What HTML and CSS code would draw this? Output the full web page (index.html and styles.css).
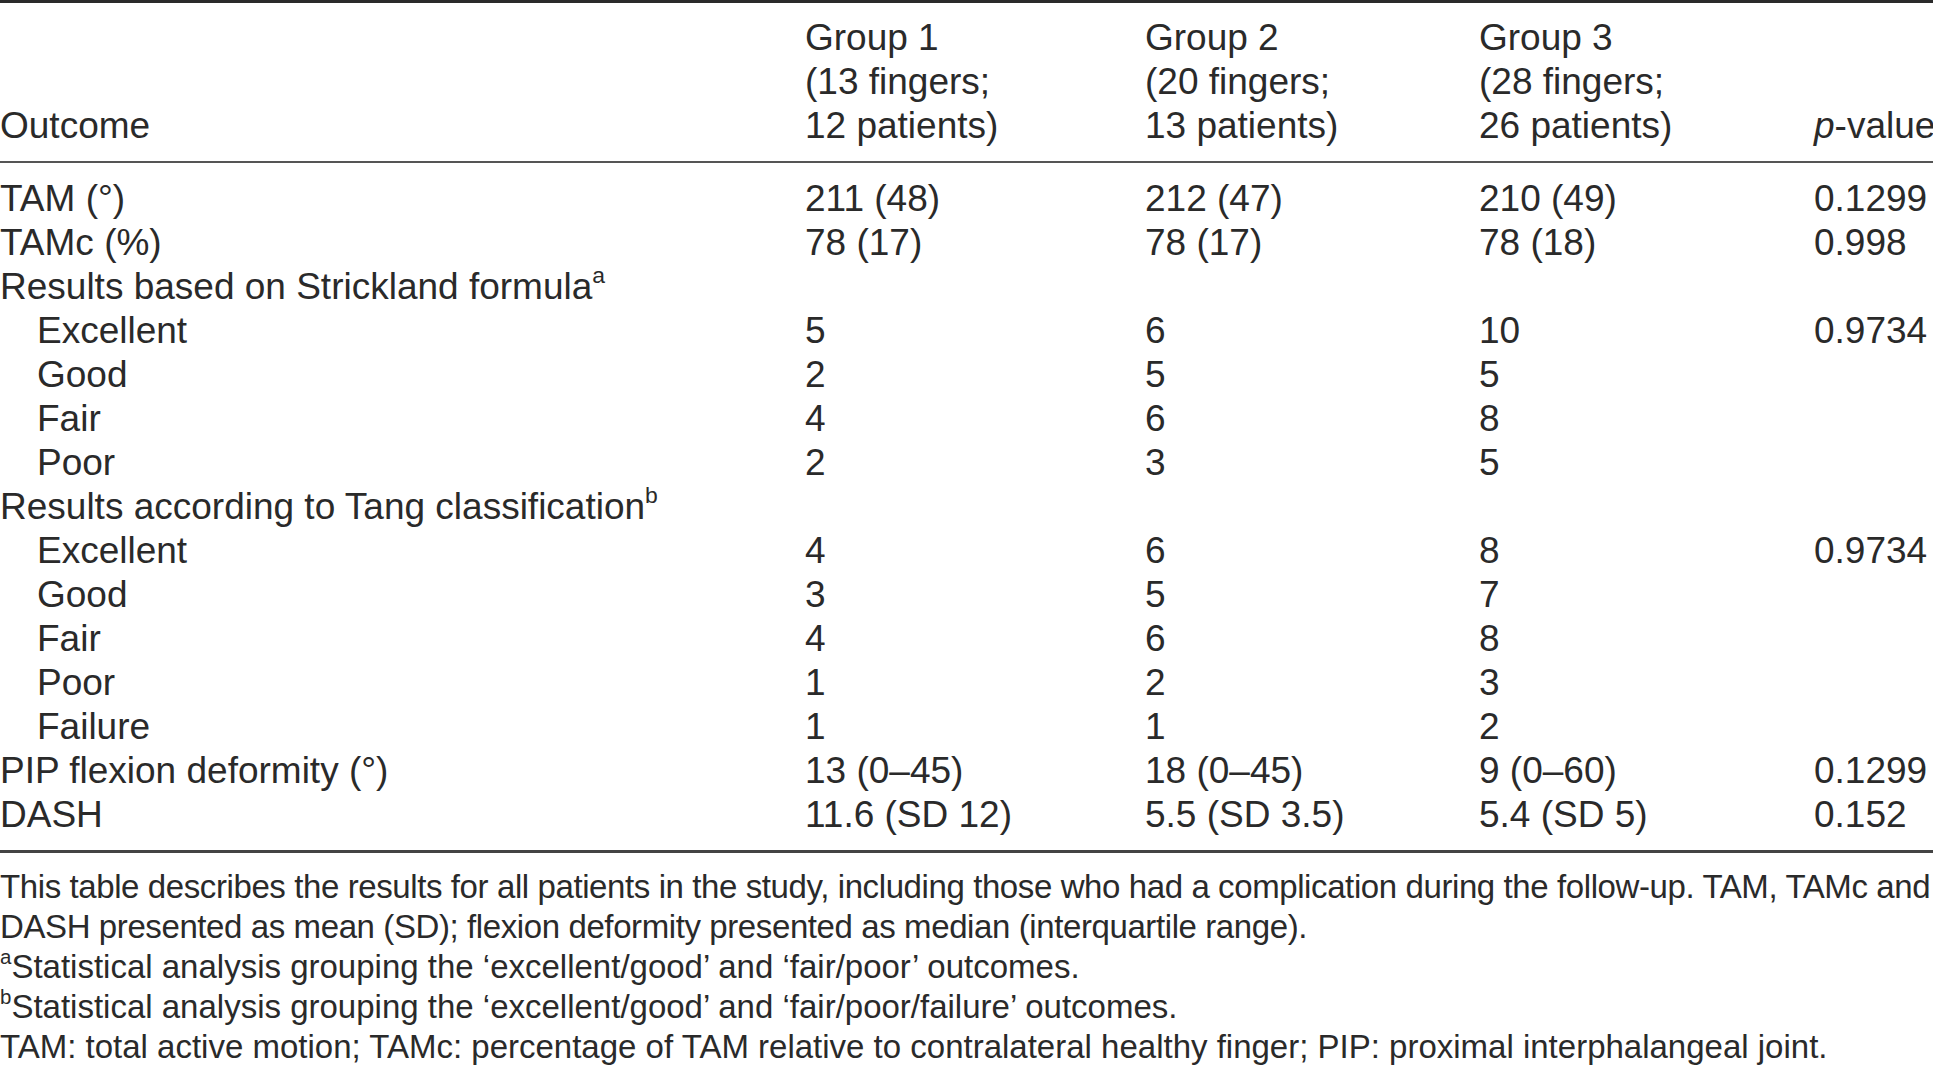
FILE: index.html
```html
<!DOCTYPE html>
<html lang="en">
<head>
<meta charset="utf-8">
<title>Outcomes table</title>
<link rel="stylesheet" href="styles.css">
</head>
<body>
<div class="page">
  <table class="results">
    <colgroup>
      <col class="c-outcome">
      <col class="c-g1">
      <col class="c-g2">
      <col class="c-g3">
      <col class="c-p">
    </colgroup>
    <thead>
      <tr>
        <th>Outcome</th>
        <th>Group 1<br>(13 fingers;<br>12 patients)</th>
        <th>Group 2<br>(20 fingers;<br>13 patients)</th>
        <th>Group 3<br>(28 fingers;<br>26 patients)</th>
        <th><i>p</i>-value</th>
      </tr>
    </thead>
    <tbody>
      <tr class="first"><td>TAM (°)</td><td>211 (48)</td><td>212 (47)</td><td>210 (49)</td><td>0.1299</td></tr>
      <tr><td>TAMc (%)</td><td>78 (17)</td><td>78 (17)</td><td>78 (18)</td><td>0.998</td></tr>
      <tr><td>Results based on Strickland formula<sup>a</sup></td><td></td><td></td><td></td><td></td></tr>
      <tr><td class="sub">Excellent</td><td>5</td><td>6</td><td>10</td><td>0.9734</td></tr>
      <tr><td class="sub">Good</td><td>2</td><td>5</td><td>5</td><td></td></tr>
      <tr><td class="sub">Fair</td><td>4</td><td>6</td><td>8</td><td></td></tr>
      <tr><td class="sub">Poor</td><td>2</td><td>3</td><td>5</td><td></td></tr>
      <tr><td>Results according to Tang classification<sup>b</sup></td><td></td><td></td><td></td><td></td></tr>
      <tr><td class="sub">Excellent</td><td>4</td><td>6</td><td>8</td><td>0.9734</td></tr>
      <tr><td class="sub">Good</td><td>3</td><td>5</td><td>7</td><td></td></tr>
      <tr><td class="sub">Fair</td><td>4</td><td>6</td><td>8</td><td></td></tr>
      <tr><td class="sub">Poor</td><td>1</td><td>2</td><td>3</td><td></td></tr>
      <tr><td class="sub">Failure</td><td>1</td><td>1</td><td>2</td><td></td></tr>
      <tr><td>PIP flexion deformity (°)</td><td>13 (0–45)</td><td>18 (0–45)</td><td>9 (0–60)</td><td>0.1299</td></tr>
      <tr class="last"><td>DASH</td><td>11.6 (SD 12)</td><td>5.5 (SD 3.5)</td><td>5.4 (SD 5)</td><td>0.152</td></tr>
    </tbody>
  </table>
  <div class="notes">
    <p class="tight">This table describes the results for all patients in the study, including those who had a complication during the follow-up. TAM, TAMc and<br>DASH presented as mean (SD); flexion deformity presented as median (interquartile range).</p>
    <p><sup>a</sup>Statistical analysis grouping the ‘excellent/good’ and ‘fair/poor’ outcomes.</p>
    <p><sup>b</sup>Statistical analysis grouping the ‘excellent/good’ and ‘fair/poor/failure’ outcomes.</p>
    <p>TAM: total active motion; TAMc: percentage of TAM relative to contralateral healthy finger; PIP: proximal interphalangeal joint.</p>
  </div>
</div>
</body>
</html>
```

FILE: styles.css
```css
html, body {
  margin: 0;
  padding: 0;
  background: #ffffff;
  overflow: hidden;
}

.page {
  width: 1933px;
  overflow: hidden;
  font-family: "Liberation Sans", Arial, sans-serif;
  color: #2a2a2a;
}

.results {
  border-collapse: collapse;
  table-layout: fixed;
  width: 2000px;
  font-size: 37px;
  line-height: 44px;
  border-top: 3px solid #2a2a2a;
  border-bottom: 3px solid #444444;
}

.c-outcome { width: 805px; }
.c-g1 { width: 340px; }
.c-g2 { width: 334px; }
.c-g3 { width: 335px; }
.c-p { width: 186px; }

.results th,
.results td {
  padding: 0;
  text-align: left;
  font-weight: normal;
  white-space: nowrap;
  vertical-align: bottom;
}

.results thead th {
  padding-top: 13px;
  padding-bottom: 13px;
  border-bottom: 2px solid #555555;
}

.results tbody tr.first td { padding-top: 14px; }
.results tbody tr.last td { padding-bottom: 13px; }

.results td.sub { padding-left: 37px; }

sup {
  font-size: 0.62em;
  line-height: 0;
  vertical-align: 0.7em;
}

.notes {
  padding-top: 14px;
  font-size: 33px;
  line-height: 40px;
  white-space: nowrap;
}

.notes p {
  margin: 0;
}

.notes p.tight {
  letter-spacing: -0.4px;
}
```
